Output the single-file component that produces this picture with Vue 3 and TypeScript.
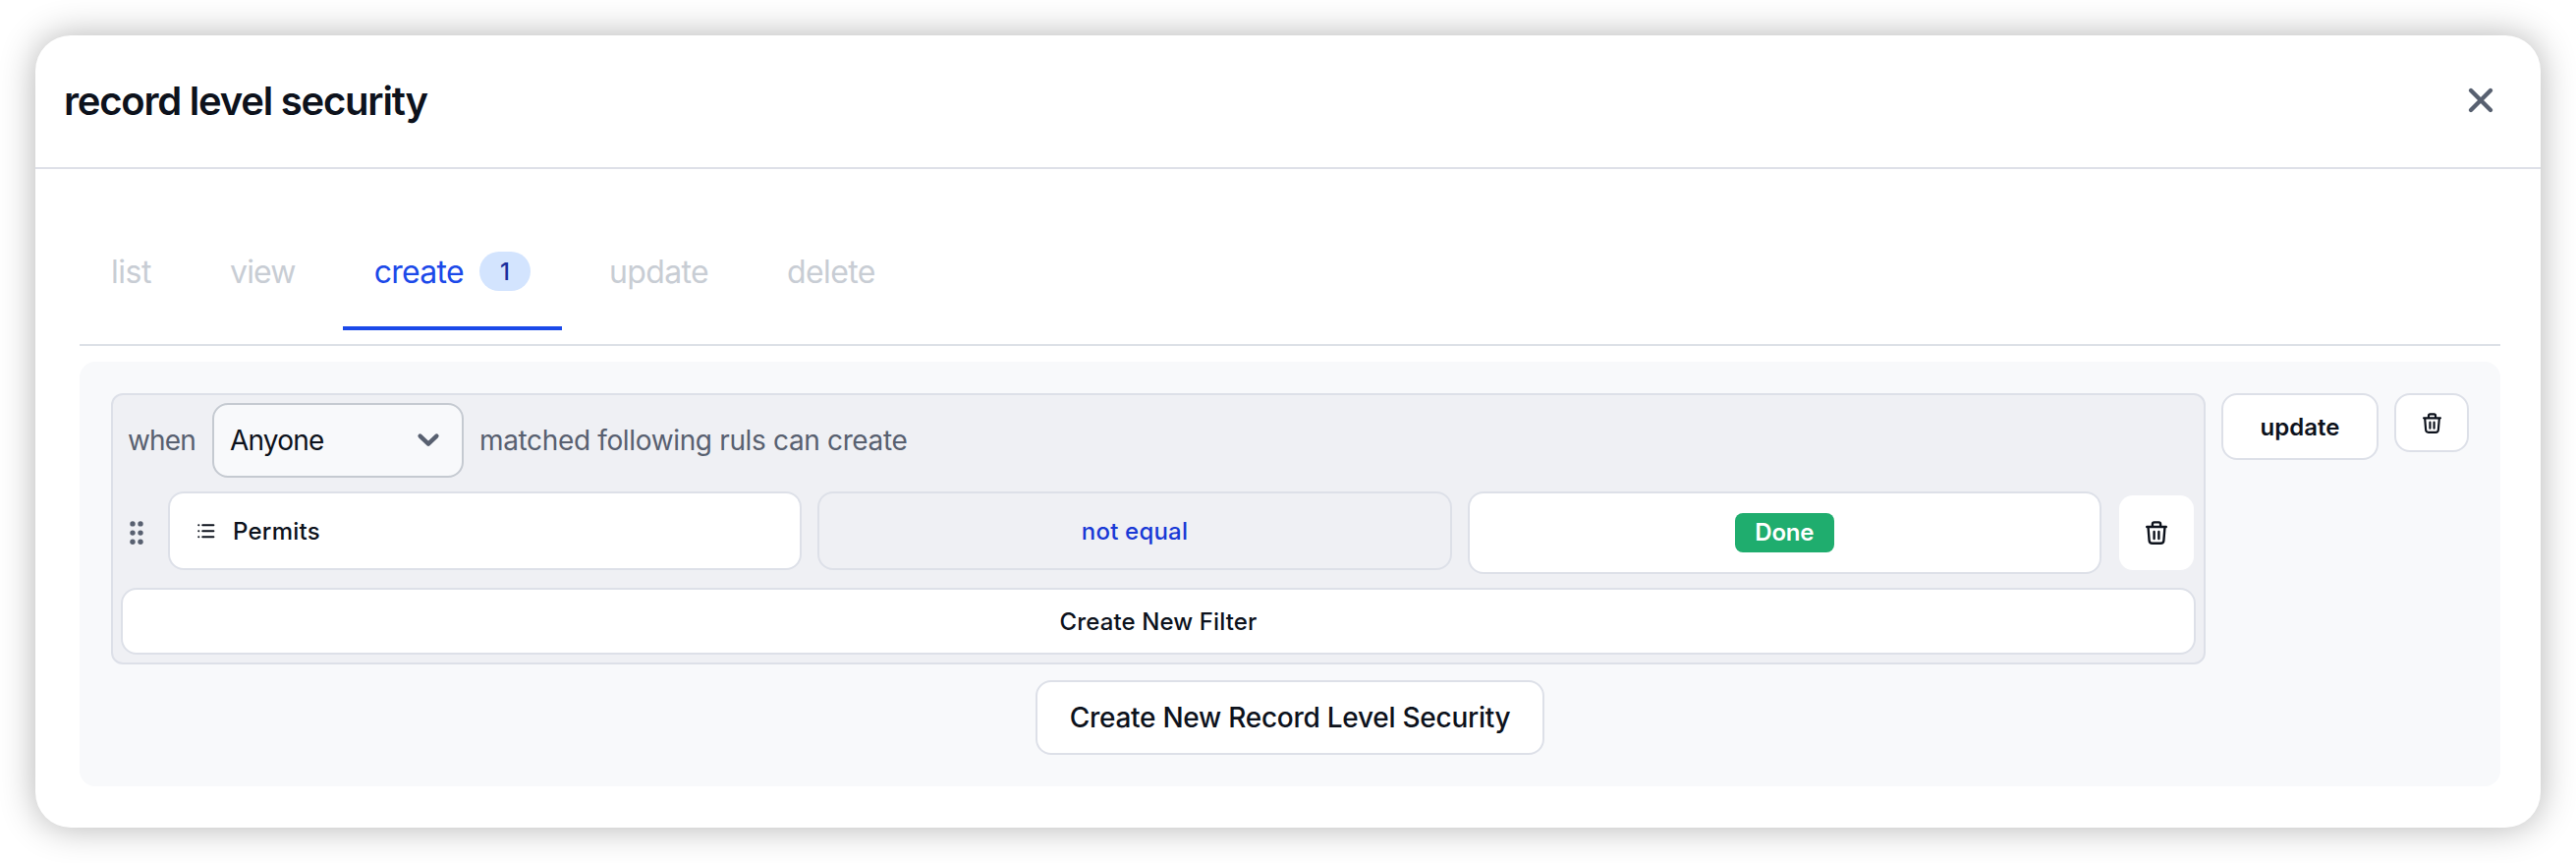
<script setup lang="ts">
import { ref } from 'vue'

interface Tab {
  name: string
  count?: number
}

const tabs: Tab[] = [
  { name: 'list' },
  { name: 'view' },
  { name: 'create', count: 1 },
  { name: 'update' },
  { name: 'delete' },
]
const active = ref('create')
</script>

<template>
  <div class="page">
    <section class="modal">
      <header class="head">
        <h1 class="title">record level security</h1>
        <button class="close" aria-label="Close">
          <svg width="24" height="24" viewBox="0 0 24 24" fill="none" stroke="currentColor" stroke-width="4.4" stroke-linecap="round">
            <path d="M2 2L22 22M22 2L2 22" />
          </svg>
        </button>
      </header>

      <div class="body">
        <nav class="tabs">
          <button
            v-for="tab in tabs"
            :key="tab.name"
            class="tab"
            :class="[`tab-${tab.name}`, { active: tab.name === active }]"
            @click="active = tab.name"
          >
            <span class="tab-label">{{ tab.name }}</span>
            <span v-if="tab.count" class="badge">{{ tab.count }}</span>
          </button>
        </nav>

        <div class="panel">
          <div class="rule">
            <div class="group">
              <div class="when-row">
                <span class="when">when</span>
                <div class="select">
                  <span>Anyone</span>
                  <svg width="24" height="16" viewBox="0 0 24 16" fill="none" stroke="currentColor" stroke-width="4.4" stroke-linecap="round" stroke-linejoin="round">
                    <path d="M3.6 3.6L12 11.6L20.4 3.6" />
                  </svg>
                </div>
                <span class="matched">matched following ruls can create</span>
              </div>

              <div class="filter">
                <svg class="grip" width="14" height="24" viewBox="0 0 14 24" fill="currentColor">
                  <circle cx="3" cy="2.9" r="2.7" /><circle cx="11" cy="2.9" r="2.7" />
                  <circle cx="3" cy="12.1" r="2.7" /><circle cx="11" cy="12.1" r="2.7" />
                  <circle cx="3" cy="21.3" r="2.7" /><circle cx="11" cy="21.3" r="2.7" />
                </svg>
                <div class="cells">
                  <div class="cell field">
                    <svg width="18" height="16" viewBox="0 0 18 16" fill="none" stroke="currentColor" stroke-width="2" stroke-linecap="round">
                      <path d="M5.2 2.2H16.4M5.2 8.2H16.4M5.2 14.2H16.4M1.2 2.2H1.3M1.2 8.2H1.3M1.2 14.2H1.3" />
                    </svg>
                    <span class="field-name">Permits</span>
                  </div>
                  <div class="cell operator">not equal</div>
                  <div class="cell value"><span class="tag">Done</span></div>
                </div>
                <button class="remove" aria-label="Remove filter">
                  <svg width="22" height="24" viewBox="0 0 22 24" fill="none" stroke="currentColor" stroke-width="2.4" stroke-linecap="round" stroke-linejoin="round">
                    <path d="M1.2 6H20.8M6.9 6V3.2Q6.9 1.4 8.7 1.4H13.3Q15.1 1.4 15.1 3.2V6M2.5 6L3.6 19.8Q3.8 22.8 6.8 22.8H15.2Q18.2 22.8 18.4 19.8L19.5 6M8.6 11V18M13.4 11V18" />
                  </svg>
                </button>
              </div>

              <button class="btn new-filter">Create New Filter</button>
            </div>

            <button class="btn update">update</button>
            <button class="btn delete-rule" aria-label="Delete rule">
              <svg width="19" height="21" viewBox="0 0 22 24" fill="none" stroke="currentColor" stroke-width="2.5" stroke-linecap="round" stroke-linejoin="round">
                <path d="M1.2 6H20.8M6.9 6V3.2Q6.9 1.4 8.7 1.4H13.3Q15.1 1.4 15.1 3.2V6M2.5 6L3.6 19.8Q3.8 22.8 6.8 22.8H15.2Q18.2 22.8 18.4 19.8L19.5 6M8.6 11V18M13.4 11V18" />
              </svg>
            </button>
          </div>

          <button class="btn new-rule">Create New Record Level Security</button>
        </div>
      </div>
    </section>
  </div>
</template>

<style>
body {
  margin: 0;
  background: #fff;
  overflow: hidden;
}
</style>

<style scoped>
.page {
  box-sizing: border-box;
  width: 2622px;
  height: 878px;
  padding: 36px;
  overflow: hidden;
  font-family: Inter, "Liberation Sans", sans-serif;
  color: #0d121c;
}
.page *, .page *::before {
  box-sizing: border-box;
}
button {
  margin: 0;
  padding: 0;
  border: 0;
  background: none;
  font: inherit;
  color: inherit;
  white-space: nowrap;
}
svg {
  display: block;
  flex: none;
  overflow: visible;
}
.modal {
  width: 2550px;
  height: 806px;
  border-radius: 36px;
  background: #fff;
  box-shadow: 0 0 36px rgba(0, 0, 0, 0.3);
}
.head {
  display: flex;
  align-items: center;
  justify-content: space-between;
  height: 136px;
  padding: 0 49px 0 29px;
  border-bottom: 2px solid #dee0e8;
}
.title {
  margin: 0;
  font-size: 40px;
  line-height: 48px;
  font-weight: 600;
  letter-spacing: -1.22px;
}
.close {
  color: #586070;
  padding-bottom: 2px;
}
.body {
  padding: 48px 41px 42px 45px;
}
.tabs {
  display: flex;
  gap: 16px;
  height: 132px;
  border-bottom: 2px solid #dde1e7;
}
.tab {
  display: flex;
  align-items: center;
  gap: 16px;
  height: 116px;
  padding: 0 32px;
  border-bottom: 4px solid transparent;
  font-size: 32px;
  line-height: 40px;
  color: #c8cdd4;
}
.tab.active {
  color: #1b49e9;
  border-bottom-color: #1b49e9;
}
.tab-label {
  padding-top: 2px;
}
.tab-list { letter-spacing: -0.45px; }
.tab-view { letter-spacing: -0.85px; }
.tab-create { letter-spacing: -0.7px; }
.tab-update { letter-spacing: -0.65px; }
.tab-delete { letter-spacing: -0.6px; }
.badge {
  width: 52px;
  height: 40px;
  border-radius: 20px;
  background: #d3e4fe;
  color: #1a2f9c;
  font-size: 24px;
  font-weight: 500;
  line-height: 42px;
  letter-spacing: 0;
  text-align: center;
}
.panel {
  display: flex;
  flex-direction: column;
  align-items: center;
  gap: 16px;
  height: 432px;
  margin-top: 16px;
  padding: 32px;
  border-radius: 16px;
  background: #f8f9fb;
}
.rule {
  display: flex;
  align-items: flex-start;
  gap: 16px;
  width: 100%;
}
.group {
  flex: 1;
  height: 276px;
  padding: 8px;
  border: 2px solid #dde0e8;
  border-radius: 12px;
  background: #eff0f4;
}
.when-row {
  display: flex;
  align-items: center;
  height: 76px;
  font-size: 28px;
  color: #586070;
}
.when {
  width: 93px;
  padding-left: 7px;
  letter-spacing: -0.85px;
}
.select {
  display: flex;
  align-items: center;
  justify-content: space-between;
  width: 256px;
  height: 76px;
  padding: 0 22px 0 16px;
  border: 2px solid #c5cad1;
  border-radius: 16px;
  background: #f8f9fb;
  letter-spacing: -0.79px;
}
.select span {
  color: #0d121c;
}
.matched {
  margin-left: 16px;
  letter-spacing: -0.35px;
}
.filter {
  display: flex;
  align-items: flex-start;
  gap: 16px;
  height: 84px;
  margin-top: 14px;
  font-size: 24px;
  font-weight: 500;
}
.grip {
  margin: 30px 9px 0 9px;
  color: #586070;
}
.cells {
  display: grid;
  grid-template-columns: repeat(3, minmax(0, 1fr));
  align-items: start;
  gap: 16px;
  flex: 1;
}
.cell {
  display: flex;
  align-items: center;
  justify-content: center;
  height: 80px;
  border: 2px solid #dde0e8;
  border-radius: 16px;
}
.field {
  justify-content: flex-start;
  padding-left: 28px;
  background: #fff;
}
.field-name {
  margin-left: 18px;
  letter-spacing: 0.25px;
}
.operator {
  color: #1939d6;
  letter-spacing: 0.19px;
}
.value {
  height: 84px;
  background: #fff;
}
.tag {
  height: 40px;
  width: 101px;
  border-radius: 8px;
  background: #1fad6e;
  color: #fff;
  font-weight: 600;
  line-height: 40px;
  letter-spacing: -0.2px;
  text-align: center;
}
.remove {
  display: flex;
  align-items: center;
  justify-content: center;
  width: 76px;
  height: 76px;
  margin: 4px 2px 0 2px;
  border-radius: 14px;
  background: #fff;
}
.btn {
  display: flex;
  align-items: center;
  justify-content: center;
  border: 2px solid #dde0e8;
  border-radius: 16px;
  background: #fff;
  font-size: 24px;
  font-weight: 500;
}
.new-filter {
  width: 100%;
  height: 68px;
  margin-top: 14px;
  letter-spacing: 0.12px;
}
.update {
  width: 160px;
  height: 68px;
  font-weight: 600;
  letter-spacing: 0.05px;
}
.delete-rule {
  width: 76px;
  height: 60px;
}
.new-rule {
  width: 518px;
  height: 76px;
  font-size: 28px;
  letter-spacing: -0.26px;
}
</style>
